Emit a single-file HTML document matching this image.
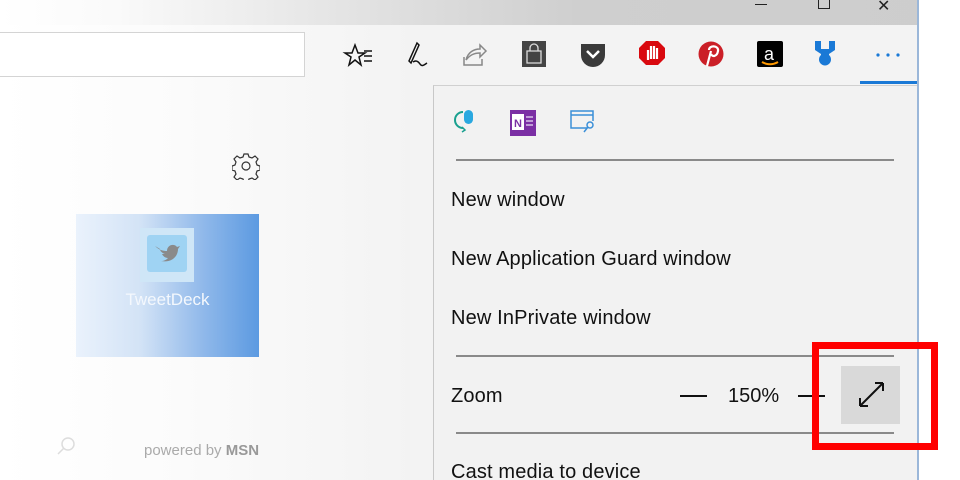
<!DOCTYPE html>
<html><head><style>
*{margin:0;padding:0;box-sizing:border-box}
html,body{width:960px;height:480px;overflow:hidden}
body{position:relative;background:#f3f3f3;font-family:"Liberation Sans",sans-serif}
.abs{position:absolute}
.t{font-size:20px;letter-spacing:0.15px;color:#111;position:absolute;left:451px}
.sep{position:absolute;left:456px;width:438px;height:2px;background:#8a8a8a}
</style></head><body>
<div class="abs" style="left:0;top:0;width:960px;height:25px;background:linear-gradient(90deg,#fff 0%,#fafafa 12%,#e0e0e0 40%,#cfcfcf 60%,#cdcdcd 100%)"></div>
<div class="abs" style="left:0;top:25px;width:918px;height:60px;background:#f3f3f3"></div>
<div class="abs" style="left:0;top:25px;width:918px;height:455px;background:linear-gradient(90deg,#fff 0%,#fbfbfb 20%,#f3f3f3 45%)"></div>
<div class="abs" style="left:917px;top:0;width:2px;height:480px;background:#9bb7d9"></div>
<div class="abs" style="left:919px;top:0;width:41px;height:480px;background:#fff"></div>
<div class="abs" style="left:755px;top:4px;width:12px;height:1px;background:#222"></div>
<div class="abs" style="left:818px;top:-2px;width:12px;height:11px;border:1px solid #222"></div>
<div class="abs" style="left:877px;top:-4px;font-size:16px;color:#222">✕</div>
<div class="abs" style="left:-2px;top:32px;width:307px;height:45px;background:#fff;border:1px solid #d4d4d4"></div>
<svg class="abs" style="left:340px;top:38px" width="570" height="34" viewBox="340 38 570 34">
<path d="M355 45l3 8h7l-6 4 2 8-6-5-6 5 2-8-6-4h7z" fill="none" stroke="#111" stroke-width="1.5"/>
<path d="M364 51h8M364 56h8M364 61h8" stroke="#111" stroke-width="1.5"/>
<path d="M417 43l-8 18 2 2 8-18z M413 62c3-2 5-1 7 2s4 1 7-1" fill="none" stroke="#111" stroke-width="1.5"/>
<path d="M464 57v8h18v-6M466 60c2-8 8-11 14-11v-4l6 6-6 6v-4c-6 0-10 2-14 7" fill="none" stroke="#888" stroke-width="1.5"/>
<rect x="522" y="41" width="24" height="26" fill="#444"/>
<path d="M527 51h14v12h-14z M530 51v-3a4 4 0 0 1 8 0v3" fill="none" stroke="#ddd" stroke-width="1.3"/>
<path d="M581 44h24v11a12 12 0 0 1-24 0z" fill="#3a3a3a"/>
<path d="M587 51l6 6 6-6" fill="none" stroke="#fff" stroke-width="2.5"/>
<path d="M646 41h12l7 7v10l-7 7h-12l-7-7v-10z" fill="#d9090f"/>
<path d="M648 60v-10M651 59v-13M654 59v-13M657 59v-11" stroke="#fff" stroke-width="2.2"/>
<circle cx="711" cy="54" r="12.5" fill="#cb1f27"/>
<path d="M709 50c0-5 10-5 9 1s-6 6-7 3M711 51l-4 15" fill="none" stroke="#fff" stroke-width="2.2"/>
<rect x="757" y="41" width="26" height="26" rx="2" fill="#000"/>
<text x="764" y="60" font-size="18" fill="#fff" font-family="Liberation Sans">a</text>
<path d="M762 62c5 3 11 3 16 0" stroke="#f90" stroke-width="2" fill="none"/>
<path d="M815 41h6v8h8v-8h6v9l-6 4v1a6 6 0 1 1-8 0v-1l-6-4z" fill="#1a79d6"/>
<circle cx="878" cy="55" r="1.6" fill="#1a79d6"/><circle cx="888" cy="55" r="1.6" fill="#1a79d6"/><circle cx="898" cy="55" r="1.6" fill="#1a79d6"/>
</svg>
<div class="abs" style="left:860px;top:81px;width:57px;height:3px;background:#1a79d6"></div>
<svg class="abs" style="left:232px;top:152px" width="28" height="28" viewBox="0 0 28 28">
<path d="M12 2h4l1 3 3 1 3-2 3 3-2 3 1 3 3 1v4l-3 1-1 3 2 3-3 3-3-2-3 1-1 3h-4l-1-3-3-1-3 2-3-3 2-3-1-3-3-1v-4l3-1 1-3-2-3 3-3 3 2 3-1z" fill="none" stroke="#333" stroke-width="1.2"/>
<circle cx="14" cy="14" r="4" fill="none" stroke="#333" stroke-width="1.2"/></svg>
<div class="abs" style="left:76px;top:214px;width:183px;height:143px;background:linear-gradient(90deg,#eaf2fc 0%,#d3e3f6 35%,#8fb8ea 70%,#5c9ae1 100%)"></div>
<div class="abs" style="left:140px;top:228px;width:54px;height:54px;background:#cfe6f7"></div>
<div class="abs" style="left:147px;top:235px;width:40px;height:37px;background:#9fd3f3;border-radius:3px"></div>
<svg class="abs" style="left:153px;top:240px" width="28" height="24" viewBox="0 0 28 24"><path d="M2 6c4 4 8 5 12 5 0-6 7-8 10-4l3-1-2 3c0 8-7 14-17 12 3 0 5-1 7-3-3 0-5-2-6-4h3c-3-1-5-3-5-5z" fill="#8a8a8a"/></svg>
<div class="abs" style="left:76px;top:290px;width:183px;text-align:center;color:#f4f8fd;font-size:17px">TweetDeck</div>
<div class="abs" style="left:144px;top:442px;font-size:15px;color:#aaa">powered by <b style="color:#999">MSN</b></div>
<svg class="abs" style="left:56px;top:436px" width="20" height="20"><circle cx="12" cy="8" r="6" fill="none" stroke="#ddd" stroke-width="1.5"/><path d="M8 12l-6 6" stroke="#ddd" stroke-width="1.5"/></svg>
<div class="abs" style="left:433px;top:85px;width:484px;height:395px;background:#f2f2f2;border-left:1px solid #c8c8c8;border-top:1px solid #d0d0d0"></div>
<svg class="abs" style="left:450px;top:105px" width="150" height="32" viewBox="450 105 150 32">
<path d="M463 112a7 7 0 0 0 0 16" fill="none" stroke="#19a08f" stroke-width="2"/>
<path d="M462 127l3 3-3 2" fill="none" stroke="#19a08f" stroke-width="1.5"/>
<rect x="464" y="110" width="9" height="14" rx="4.5" fill="#2aa8e0"/>
<rect x="510" y="110" width="26" height="26" fill="#7b2fa4"/>
<rect x="512" y="114" width="12" height="16" fill="#fff"/>
<text x="514" y="127" font-size="11" font-weight="bold" fill="#7b2fa4" font-family="Liberation Sans">N</text>
<path d="M526 117h7M526 121h7M526 125h7" stroke="#d8c2e8" stroke-width="1.5"/>
<path d="M587 128h-16v-17h22v10M571 115h22" fill="none" stroke="#3a8fd8" stroke-width="1.5"/>
<circle cx="590" cy="125" r="3" fill="none" stroke="#3a8fd8" stroke-width="1.5"/><path d="M588 127l-4 5" stroke="#3a8fd8" stroke-width="1.5"/>
</svg>
<div class="sep" style="top:159px"></div>
<div class="t" style="top:189px">New window</div>
<div class="t" style="top:248px">New Application Guard window</div>
<div class="t" style="top:307px">New InPrivate window</div>
<div class="sep" style="top:355px"></div>
<div class="t" style="top:385px">Zoom</div>
<div class="abs" style="left:680px;top:395px;width:27px;height:2px;background:#111"></div>
<div class="abs" style="left:728px;top:385px;font-size:20px;color:#111">150%</div>
<div class="abs" style="left:798px;top:395px;width:27px;height:2px;background:#111"></div>
<div class="abs" style="left:841px;top:366px;width:59px;height:58px;background:#d9d9d9"></div>
<svg class="abs" style="left:841px;top:366px" width="59" height="58"><path d="M19 40l23-23M19 40v-8M19 40h8M42 17h-8M42 17v8" fill="none" stroke="#111" stroke-width="2"/></svg>
<div class="sep" style="top:432px"></div>
<div class="t" style="top:461px">Cast media to device</div>
<div class="abs" style="left:812px;top:342px;width:126px;height:108px;border:7px solid #f00"></div>
</body></html>
